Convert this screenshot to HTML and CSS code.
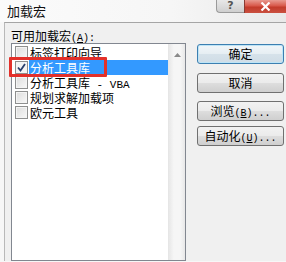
FILE: index.html
```html
<!DOCTYPE html>
<html>
<head>
<meta charset="utf-8">
<link rel="stylesheet" href="styles.css">
</head>
<body>
<div class="window">
  <div class="titlebar">
    <span class="title">加载宏</span>
    <div class="controls">
      <div class="btn-help">?</div>
      <div class="btn-close">
        <svg width="11" height="9" viewBox="0 0 11 9"><path d="M1.5 0.5 L9.5 8.5 M9.5 0.5 L1.5 8.5" stroke="#fff" stroke-width="2.2" fill="none"/></svg>
      </div>
    </div>
  </div>
  <div class="client">
    <div class="left">
      <div class="label">可用加载宏<span class="lat">(<u>A</u>):</span></div>
      <div class="listbox">
        <div class="items">
          <div class="row"><span class="cb"></span><span class="txt">标签打印向导</span></div>
          <div class="row"><span class="cb checked"><svg width="9" height="9" viewBox="0 0 9 9"><path d="M1 4.5 L3.5 7.5 L8 1" stroke="#2a3f6c" stroke-width="1.8" fill="none"/></svg></span><span class="txt sel">分析工具库</span></div>
          <div class="row"><span class="cb"></span><span class="txt">分析工具库<span class="lat"> - VBA</span></span></div>
          <div class="row"><span class="cb"></span><span class="txt">规划求解加载项</span></div>
          <div class="row"><span class="cb"></span><span class="txt">欧元工具</span></div>
        </div>
        <div class="scrollbar">
          <svg class="arrow" width="7" height="4" viewBox="0 0 7 4"><path d="M0 4 L3.5 0 L7 4 Z" fill="#8a8a8a"/></svg>
        </div>
      </div>
    </div>
    <div class="buttons">
      <div class="button default">确定</div>
      <div class="button b2">取消</div>
      <div class="button b3">浏览<span class="lat">(<u>B</u>)...</span></div>
      <div class="button b4">自动化<span class="lat">(<u>U</u>)...</span></div>
    </div>
  </div>
  <div class="redbox"></div>
</div>
</body>
</html>
```

FILE: styles.css
```css
html, body {
  margin: 0;
  padding: 0;
}
body {
  width: 286px;
  height: 262px;
  overflow: hidden;
  font-family: "Noto Sans CJK SC", "Noto Sans", sans-serif;
  font-size: 12px;
  color: #000;
}
.window {
  position: relative;
  width: 286px;
  height: 262px;
  background: #f7f7f7;
  overflow: hidden;
}
.titlebar {
  height: 22px;
  display: flex;
  justify-content: space-between;
  align-items: flex-start;
  background: linear-gradient(90deg, #fbfbfb 0%, #f6f6f6 60%, #e9e9e9 100%);
}
.title {
  font-size: 13px;
  line-height: 22px;
  padding-left: 7px;
  color: #111;
}
.controls {
  display: flex;
  align-items: flex-start;
}
.btn-help {
  width: 27px;
  height: 12px;
  border: 1px solid #9a9a9a;
  border-top: none;
  border-right: none;
  border-radius: 0 0 0 4px;
  background: linear-gradient(#e8e8e8, #cfcfcf);
  font-size: 11px;
  line-height: 11px;
  text-align: center;
  color: #555;
  font-family: "DejaVu Sans", sans-serif;
  font-weight: bold;
}
.btn-close {
  width: 41px;
  height: 13px;
  background: linear-gradient(#e89a90 0%, #d8584a 45%, #c33b2b 55%, #c95040 100%);
  border-left: 1px solid #8a3b33;
  display: flex;
  align-items: center;
  justify-content: center;
}
.client {
  margin-left: 4px;
  height: 239px;
  border-left: 1px solid #b9b9b9;
  border-top: 1px solid #a5a5a5;
  background: #f0f0f0;
  display: flex;
  gap: 11px;
  padding: 6px 0 0 6px;
  box-sizing: border-box;
}
.left {
  width: 175px;
  display: flex;
  flex-direction: column;
}
.label {
  height: 14px;
  line-height: 14px;
}
.lat {
  font-family: "Liberation Mono", monospace;
  font-size: 10px;
}
.listbox {
  flex: 1;
  border: 1px solid #828790;
  background: #fff;
  display: flex;
  height: 240px;
}
.items {
  flex: 1;
  padding-top: 1px;
}
.row {
  height: 15px;
  display: flex;
  align-items: center;
  padding-left: 3px;
}
.cb {
  width: 11px;
  height: 11px;
  border: 1px solid #8e8f8f;
  background: linear-gradient(135deg, #dcdcdc, #f8f8f8);
  box-shadow: inset 0 0 0 1px #f4f4f4;
  display: flex;
  align-items: center;
  justify-content: center;
  flex: none;
}
.cb.checked {
  background: #f4f4f4;
}
.txt {
  margin-left: 1px;
  padding-left: 1px;
  line-height: 15px;
  height: 15px;
  flex: 1;
  white-space: nowrap;
  overflow: hidden;
}
.txt .lat {
  font-size: 11px;
}
.txt.sel {
  background: #3399ff;
  color: #fff;
}
.scrollbar {
  width: 16px;
  border-left: 1px solid #e6e6e6;
  background: linear-gradient(90deg, #e8e8e8, #f6f6f6 30%, #f6f6f6 70%, #e8e8e8);
  display: flex;
  justify-content: center;
}
.arrow {
  margin-top: 9px;
}
.buttons {
  display: flex;
  flex-direction: column;
  padding-top: 15px;
}
.button {
  width: 85px;
  height: 18px;
  border: 1px solid #707070;
  border-radius: 3px;
  background: linear-gradient(#f2f2f2 0%, #ebebeb 48%, #dddddd 52%, #cfcfcf 100%);
  text-align: center;
  line-height: 18px;
  white-space: nowrap;
}
.button.default {
  border-color: #3c7fb1;
  box-shadow: inset 0 0 0 1px #bde4f6;
  background: linear-gradient(#f1f6f9 0%, #e6eef3 48%, #d6e2ea 52%, #cfdce6 100%);
}
.b2 { margin-top: 9px; }
.b3 { margin-top: 8px; }
.b4 { margin-top: 5px; }
.redbox {
  position: absolute;
  left: 9px;
  top: 57px;
  width: 98px;
  height: 20px;
  box-sizing: border-box;
  border: 3px solid #e3302a;
  border-radius: 1px;
}
```
